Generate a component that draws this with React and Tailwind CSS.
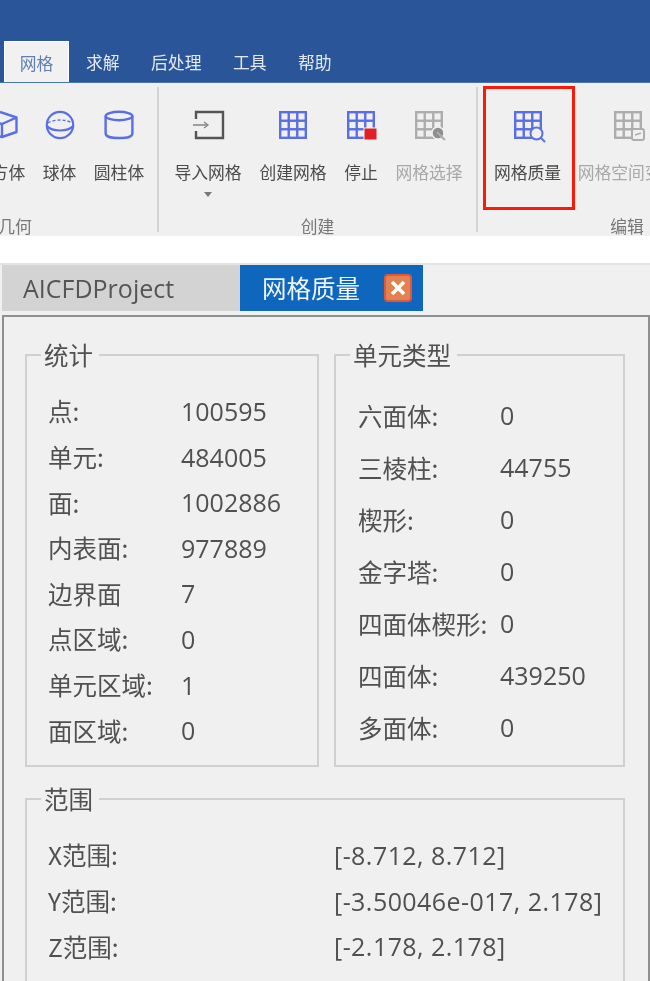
const cjk = "font-['Noto_Sans_CJK_SC','Open_Sans',sans-serif]";

function GridLines({ color }) {
  const lines = [];
  for (let i = 0; i <= 3; i++) {
    const p = 1.2 + i * 8.53;
    lines.push(<line key={`v${i}`} x1={p} y1="0" x2={p} y2="28" />);
    lines.push(<line key={`h${i}`} x1="0" y1={p} x2="28" y2={p} />);
  }
  return (
    <g stroke={color} strokeWidth="2.4" fill="none">
      {lines}
    </g>
  );
}

function Icon({ children }) {
  return (
    <svg width="32" height="32" viewBox="-2 -2 32 32" className="overflow-visible">
      {children}
    </svg>
  );
}

const BLUE = "#5a6ee6";
const GRAY = "#adadad";
const BG = "#f0f0f0";

const CubeIcon = () => (
  <Icon>
    <g stroke={BLUE} strokeWidth="2.4" fill="none" strokeLinejoin="round">
      <path d="M14 1 L30.5 6.5 V21 L16 26 V13 L30.5 6.5" />
      <path d="M14 1 L-1 8 L16 13 M-1 8 V21 L16 26" />
    </g>
  </Icon>
);

const SphereIcon = () => (
  <Icon>
    <g stroke={BLUE} strokeWidth="2.2" fill="none">
      <circle cx="14" cy="14" r="13.2" />
      <path d="M1 15 C6 21 22 21 27 15" />
      <path d="M2 12 C8 8 20 8 26 12" strokeDasharray="3 2" strokeWidth="1.4" />
    </g>
  </Icon>
);

const CylinderIcon = () => (
  <Icon>
    <g stroke={BLUE} strokeWidth="2.4" fill="none">
      <ellipse cx="14" cy="5" rx="13.4" ry="4.2" />
      <path d="M0.6 5 V22 C0.6 26 5 27 14 27 C23 27 27.4 26 27.4 22 V5" />
    </g>
  </Icon>
);

const ImportIcon = () => (
  <Icon>
    <g fill="none">
      <path d="M2 8 V1 H29 V27 H2 V20" stroke="#555555" strokeWidth="2.4" />
      <path d="M-1 14 H13" stroke="#8a8a8a" strokeWidth="1.6" />
      <path d="M10 11 L14 14 L10 17" stroke="#8a8a8a" strokeWidth="1.4" />
    </g>
  </Icon>
);

const MeshIcon = () => (
  <Icon>
    <GridLines color={BLUE} />
  </Icon>
);

const StopIcon = () => (
  <Icon>
    <GridLines color={BLUE} />
    <rect x="17" y="17" width="13" height="12" fill="#e01f26" stroke={BG} strokeWidth="1" />
  </Icon>
);

const SelectIcon = () => (
  <Icon>
    <GridLines color={GRAY} />
    <circle cx="23" cy="22" r="6" fill="#8f8f8f" stroke={BG} strokeWidth="1.5" />
    <path d="M22 21 L30 29" stroke={GRAY} strokeWidth="2" />
  </Icon>
);

const QualityIcon = () => (
  <Icon>
    <GridLines color={BLUE} />
    <circle cx="22.5" cy="22.5" r="6" fill={BG} stroke={BLUE} strokeWidth="2" />
    <path d="M27 27 L31 31" stroke={BLUE} strokeWidth="2" />
  </Icon>
);

const TransformIcon = () => (
  <Icon>
    <GridLines color={GRAY} />
    <rect x="18" y="18" width="12" height="11" rx="2" fill={BG} stroke={GRAY} strokeWidth="2" />
    <path d="M21 24 L27 22" stroke={GRAY} strokeWidth="1.6" />
  </Icon>
);

function RibbonItem({ icon, label, width, disabled, arrow, boxed }) {
  return (
    <div
      className={`flex flex-col items-center shrink-0 h-[124px] ${width} ${
        boxed ? "border-[3.5px] border-[#fb1a0a] pt-[19.5px] pr-[3px]" : "pt-[23px]"
      }`}
    >
      <div className="h-[32px] flex items-center justify-center">{icon}</div>
      <div
        className={`mt-[19px] text-[16.8px] leading-[24px] whitespace-nowrap ${
          disabled ? "text-[#a8a8a8]" : "text-[#4a4a4a]"
        }`}
      >
        {label}
      </div>
      {arrow && (
        <div className="mt-[8px] w-0 h-0 border-x-[4px] border-x-transparent border-t-[5px] border-t-[#777777]" />
      )}
    </div>
  );
}

function RibbonGroup({ label, width, className, children }) {
  return (
    <div className={`flex flex-col shrink-0 ${width}`}>
      <div className={`flex h-[124px] mt-[3px] ${className}`}>{children}</div>
      <div className="text-center text-[16.8px] leading-[20px] mt-[6px] text-[#777777]">{label}</div>
    </div>
  );
}

function Row({ label, value, labelWidth, height, valueClass = "" }) {
  return (
    <div className={`flex items-center ${height}`}>
      <div className={`shrink-0 ${labelWidth}`}>{label}</div>
      <div className={`whitespace-nowrap text-[25px] font-['Open_Sans',sans-serif] ${valueClass}`}>{value}</div>
    </div>
  );
}

function Box({ title, className, bodyClass, children }) {
  return (
    <fieldset className={`border-2 border-[#d0d0d0] ${className}`}>
      <legend className="ml-[14px] pl-[3px] pr-[6px] leading-[32px]">{title}</legend>
      <div className={bodyClass}>{children}</div>
    </fieldset>
  );
}

const stats = [
  ["点:", "100595"],
  ["单元:", "484005"],
  ["面:", "1002886"],
  ["内表面:", "977889"],
  ["边界面", "7"],
  ["点区域:", "0"],
  ["单元区域:", "1"],
  ["面区域:", "0"],
];

const cellTypes = [
  ["六面体:", "0"],
  ["三棱柱:", "44755"],
  ["楔形:", "0"],
  ["金字塔:", "0"],
  ["四面体楔形:", "0"],
  ["四面体:", "439250"],
  ["多面体:", "0"],
];

const ranges = [
  ["X范围:", "[-8.712, 8.712]"],
  ["Y范围:", "[-3.50046e-017, 2.178]"],
  ["Z范围:", "[-2.178, 2.178]"],
];

const menus = ["求解", "后处理", "工具", "帮助"];

export default function App() {
  return (
    <div className={`w-[650px] h-[981px] overflow-hidden bg-white blur-[0.4px] ${cjk}`}>
      {/* title + menu */}
      <div className="h-[83px] bg-[#2a5699] flex items-end pl-[4px] border-b border-[#4a74ad]">
        <div className="w-[65px] h-[41px] pt-[3px] bg-[#f1f1f1] border-x border-t border-white text-[#5f7fb3] text-[16.8px] flex items-center justify-center">
          网格
        </div>
        <div className="flex gap-[31.5px] pl-[17px] pt-[4px] h-[42px] items-center text-[16.8px] text-[#e4e9f1]">
          {menus.map((m) => (
            <div key={m}>{m}</div>
          ))}
        </div>
      </div>

      {/* ribbon */}
      <div className="h-[153px] bg-[#f0f0f0] flex ml-[-127px] w-[777px]">
        <RibbonGroup label="几何" width="w-[284px]" className="justify-end pr-[1.5px]">
          <RibbonItem icon={<CubeIcon />} label="长方体" width="w-[73px]" />
          <RibbonItem icon={<SphereIcon />} label="球体" width="w-[46px]" />
          <RibbonItem icon={<CylinderIcon />} label="圆柱体" width="w-[73px]" />
        </RibbonGroup>
        <div className="w-[2px] h-[145px] mt-[4px] bg-[#d4d4d4] shrink-0" />
        <RibbonGroup label="创建" width="w-[317px]" className="pl-[7px]">
          <RibbonItem icon={<ImportIcon />} label="导入网格" width="w-[84px]" arrow />
          <RibbonItem icon={<MeshIcon />} label="创建网格" width="w-[86px]" />
          <RibbonItem icon={<StopIcon />} label="停止" width="w-[50px]" />
          <RibbonItem icon={<SelectIcon />} label="网格选择" width="w-[86px]" disabled />
        </RibbonGroup>
        <div className="w-[2px] h-[145px] mt-[4px] bg-[#d4d4d4] shrink-0" />
        <RibbonGroup label="编辑" width="w-[298px]" className="pl-[5px]">
          <RibbonItem icon={<QualityIcon />} label="网格质量" width="w-[92px]" boxed />
          <RibbonItem icon={<TransformIcon />} label="网格空间变换" width="w-[106px]" disabled />
        </RibbonGroup>
      </div>

      {/* document tabs */}
      <div className="mt-[27px] bg-[#f0f0f0] h-[718px] overflow-hidden">
        <div className="flex h-[48px] pl-[2px] border-t-2 border-[#e4e4e4]">
          <div className="w-[238px] bg-[#d3d3d3] pl-[21px] pt-[2px] flex items-center text-[25px] text-[#555555] font-['Open_Sans',sans-serif]">
            AICFDProject
          </div>
          <div className="w-[183px] bg-[#0e66bd] pl-[22px] flex items-center text-[24.5px] text-[#eef4fb]">
            网格质量
            <div className="ml-[24px] w-[28px] h-[28px] rounded-[4px] bg-[#e3824f] border-2 border-[#e2553f] flex items-center justify-center">
              <svg width="16" height="16" viewBox="0 0 16 16">
                <path d="M2 2 L14 14 M14 2 L2 14" stroke="#ffffff" strokeWidth="3.6" />
              </svg>
            </div>
          </div>
        </div>

        {/* quality panel */}
        <div className="mt-[4px] ml-[2px] border-2 border-[#8f8f8f] pt-[22px] pl-[21px] pr-[23px] h-[800px] text-[24.5px] text-[#505050]">
          <div className="flex gap-[15px]">
            <Box title="统计" className="w-[294px] h-[428px]" bodyClass="pl-[21px] pt-[18px]">
              {stats.map(([k, v]) => (
                <Row key={k} label={k} value={v} labelWidth="w-[133px]" height="h-[45.6px]" />
              ))}
            </Box>
            <Box title="单元类型" className="w-[291px] h-[428px]" bodyClass="pl-[22px] pt-[19px]">
              {cellTypes.map(([k, v]) => (
                <Row key={k} label={k} value={v} labelWidth="w-[142px]" height="h-[52px]" />
              ))}
            </Box>
          </div>
          <Box title="范围" className="mt-[16px] w-[600px] h-[300px]" bodyClass="pl-[21px] pt-[18px]">
            {ranges.map(([k, v]) => (
              <Row
                key={k}
                label={k}
                value={v}
                labelWidth="w-[286px]"
                height="h-[45.6px]"
                valueClass="tracking-[0.45px]"
              />
            ))}
          </Box>
        </div>
      </div>
    </div>
  );
}
